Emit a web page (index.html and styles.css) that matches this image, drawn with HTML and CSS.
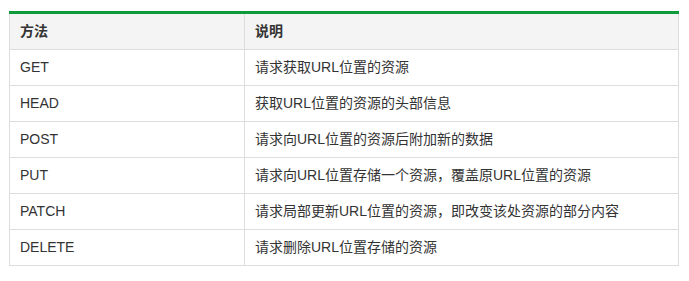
FILE: index.html
```html
<!DOCTYPE html>
<html lang="zh-CN">
<head>
<meta charset="utf-8">
<link rel="stylesheet" href="styles.css">
</head>
<body>
<div class="wrap">
<table class="tbl">
  <thead>
    <tr><th class="c1">方法</th><th>说明</th></tr>
  </thead>
  <tbody>
    <tr><td>GET</td><td>请求获取URL位置的资源</td></tr>
    <tr><td>HEAD</td><td>获取URL位置的资源的头部信息</td></tr>
    <tr><td>POST</td><td>请求向URL位置的资源后附加新的数据</td></tr>
    <tr><td>PUT</td><td>请求向URL位置存储一个资源，覆盖原URL位置的资源</td></tr>
    <tr><td>PATCH</td><td>请求局部更新URL位置的资源，即改变该处资源的部分内容</td></tr>
    <tr><td>DELETE</td><td>请求删除URL位置存储的资源</td></tr>
  </tbody>
</table>
</div>
</body>
</html>
```
FILE: styles.css
```css
html, body {
  margin: 0;
  padding: 0;
  background: #fff;
}
.wrap {
  padding: 11px 0 0 9px;
}
.tbl {
  width: 670px;
  border-collapse: collapse;
  border-top: 3px solid #0c9a3b;
  font-family: "Liberation Sans", "Noto Sans CJK SC", Arial, sans-serif;
  font-size: 14px;
  color: #333;
}
.tbl th, .tbl td {
  border: 1px solid #ddd;
  padding: 7px 10px;
  line-height: 21px;
  height: 21px;
  text-align: left;
  vertical-align: middle;
}
.tbl th {
  background: #f4f4f4;
  font-weight: bold;
}
.tbl .c1 {
  width: 214px;
}
```
